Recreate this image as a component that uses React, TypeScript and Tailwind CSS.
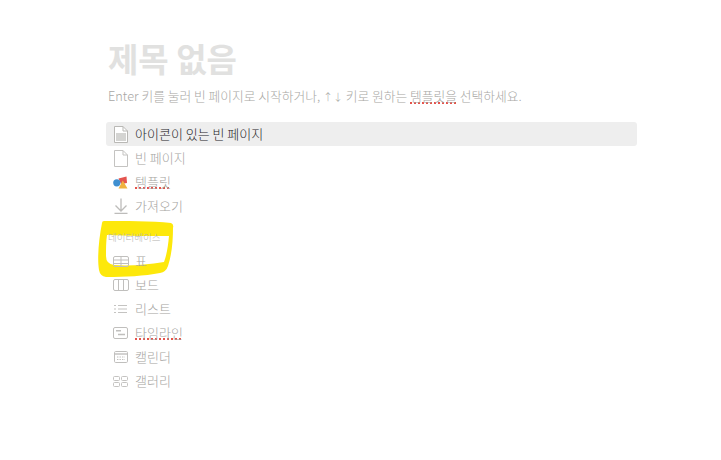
const font = { fontFamily: '"Noto Sans CJK KR", "Liberation Sans", sans-serif' };

function DocFilled() {
  return (
    <svg width="14" height="17" viewBox="0 0 14 17" fill="none">
      <path d="M.5.5h8.5L13.5 5v11.5H.5V.5z" fill="#fff" stroke="#b9b8b5" />
      <path d="M2 7h10v8H2z" fill="#d4d4d2" />
      <path d="M9 .5V5h4.5" stroke="#b9b8b5" />
    </svg>
  );
}

function DocEmpty() {
  return (
    <svg width="14" height="17" viewBox="0 0 14 17" fill="none" stroke="#c4c3c1">
      <path d="M.5.5h8.5L13.5 5v11.5H.5V.5z" />
      <path d="M9 .5V5h4.5" />
    </svg>
  );
}

function TemplateIcon() {
  return (
    <svg width="15" height="13" viewBox="0 0 15 13">
      <path d="M5.5 2.5L13.5.5l.5 6.5-6 1z" fill="#e4544f" />
      <circle cx="3.8" cy="6.8" r="3.6" fill="#3f8fd0" />
      <path d="M9.8 4.5L14.5 12.5H5.5z" fill="#efb23f" />
    </svg>
  );
}

function ImportIcon() {
  return (
    <svg width="14" height="16" viewBox="0 0 14 16" fill="none" stroke="#bdbcba" strokeWidth="1.3">
      <path d="M7 .5v12M1.5 7.5L7 13l5.5-5.5M.5 15.5h13" />
    </svg>
  );
}

function TableIcon() {
  return (
    <svg width="16" height="11" viewBox="0 0 16 11" fill="none" stroke="#c0bfbd">
      <rect x=".5" y=".5" width="15" height="10" rx="1.5" />
      <path d="M.5 4h15M.5 7.5h15M8 .5v10" />
    </svg>
  );
}

function BoardIcon() {
  return (
    <svg width="16" height="12" viewBox="0 0 16 12" fill="none" stroke="#c0bfbd">
      <rect x=".5" y=".5" width="15" height="11" rx="1.5" />
      <path d="M5.5.5v11M10.5.5v11" />
    </svg>
  );
}

function ListIcon() {
  return (
    <svg width="13" height="10" viewBox="0 0 13 10" fill="none" stroke="#c4c3c1">
      <path d="M0 1.5h2M4 1.5h9M0 5h2M4 5h9M0 8.5h2M4 8.5h9" />
    </svg>
  );
}

function TimelineIcon() {
  return (
    <svg width="15" height="12" viewBox="0 0 15 12" fill="none" stroke="#c0bfbd">
      <rect x=".5" y=".5" width="14" height="11" rx="1.5" />
      <path d="M3 3.8h5M5 7.5h7" strokeWidth="1.4" />
    </svg>
  );
}

function CalendarIcon() {
  return (
    <svg width="14" height="12" viewBox="0 0 14 12" fill="none" stroke="#c0bfbd">
      <rect x=".5" y=".5" width="13" height="11" rx="1.2" />
      <path d="M.5 3h13" strokeWidth="1.4" />
      <path d="M3 6h8M3 8.5h8" strokeDasharray="1.4 1.1" />
    </svg>
  );
}

function GalleryIcon() {
  return (
    <svg width="15" height="11" viewBox="0 0 15 11" fill="none" stroke="#c4c3c1">
      <rect x=".5" y=".5" width="6" height="4" rx="1" />
      <rect x="8.5" y=".5" width="6" height="4" rx="1" />
      <rect x=".5" y="6.5" width="6" height="4" rx="1" />
      <rect x="8.5" y="6.5" width="6" height="4" rx="1" />
    </svg>
  );
}

function Row({ icon, label, active, misspelled }: { icon: React.ReactNode; label: string; active?: boolean; misspelled?: boolean }) {
  return (
    <div className={`h-6 flex items-center rounded-[3px] ${active ? "bg-[#eeeeee]" : ""}`}>
      <div className="w-[29px] flex justify-center shrink-0">{icon}</div>
      <span
        className={`pb-[2px] text-[13px] leading-none font-light ${active ? "text-[#26241f]" : "text-[#a6a5a2]"} ${misspelled ? "underline decoration-dotted decoration-[#e5534b] decoration-2 underline-offset-1" : ""}`}
      >
        {label}
      </span>
    </div>
  );
}

export default function App() {
  return (
    <div className="relative w-[721px] h-[460px] bg-white overflow-hidden" style={font}>
      {/* yellow marker ring drawn around the database section */}
      <svg className="absolute left-[96px] top-[218px]" width="80" height="62" viewBox="0 0 80 62">
        <path
          fillRule="evenodd"
          d="M8 3 C28 3 56 3 75 5 Q78 6 77 10 C77 22 76 36 72 48 Q70 54 64 55 C48 58 30 59 10 59 Q4 58 3 52 C1 40 3 20 6 5 Q6 3 8 3 Z M11 17 C30 18 55 18 73 18 C72 28 71 36 68 44 C50 47 32 48 18 47 Q10 46 10 38 C10 30 10 24 11 17 Z"
          fill="#fde80b"
        />
      </svg>

      <div className="relative w-[531px] ml-[106px] pt-[35px]">
        <h1 className="pl-[2px] h-[47px] flex items-center text-[33px] leading-none font-bold text-[#e1e1e0]">제목 없음</h1>
        <p className="pl-[2px] mt-[1px] h-[26px] flex items-center text-[12.75px] font-light text-[#a8a7a4] whitespace-pre">
          Enter 키를 눌러 빈 페이지로 시작하거나, <span className="text-[10px]">↑↓</span> 키로 원하는{" "}
          <span className="underline decoration-dotted decoration-[#e5534b] decoration-2 underline-offset-1">템플릿을</span> 선택하세요.
        </p>

        <div className="mt-[13px]">
          <Row icon={<DocFilled />} label="아이콘이 있는 빈 페이지" active />
          <Row icon={<DocEmpty />} label="빈 페이지" />
          <Row icon={<TemplateIcon />} label="템플릿" misspelled />
          <Row icon={<ImportIcon />} label="가져오기" />
        </div>

        <div className="h-[31px] pl-[2px] pt-[13px] text-[9.5px] leading-[12px] font-light text-[#b5b4b1]">데이터베이스</div>

        <div>
          <Row icon={<TableIcon />} label="표" />
          <Row icon={<BoardIcon />} label="보드" />
          <Row icon={<ListIcon />} label="리스트" />
          <Row icon={<TimelineIcon />} label="타임라인" misspelled />
          <Row icon={<CalendarIcon />} label="캘린더" />
          <Row icon={<GalleryIcon />} label="갤러리" />
        </div>
      </div>
    </div>
  );
}
